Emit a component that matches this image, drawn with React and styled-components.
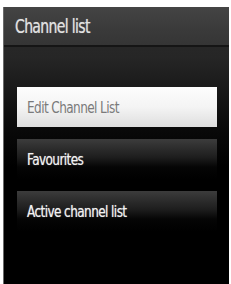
import React from 'react'
import styled, { createGlobalStyle } from 'styled-components'

const GlobalStyle = createGlobalStyle`
  html, body {
    margin: 0;
    padding: 0;
    background: #ffffff;
  }
`

const items = [
  { label: 'Edit Channel List', active: true },
  { label: 'Favourites' },
  { label: 'Active channel list' },
]

const App = () => (
  <>
    <GlobalStyle />
    <Screen>
      <Header>
        <Title>Channel list</Title>
      </Header>
      <Menu>
        {items.map((item) => (
          <Item key={item.label} active={item.active}>
            <Label>{item.label}</Label>
          </Item>
        ))}
      </Menu>
    </Screen>
  </>
)

const Screen = styled.div`
  margin: 7px 2px 0 3px;
  height: 277px;
  border-left: 1px solid #6a6a6a;
  background: linear-gradient(to bottom, #2c2c2c 0px, #262626 50px, #0a0a0a 120px, #000 160px);
  font-family: 'DejaVu Sans Condensed', 'DejaVu Sans', sans-serif;
  overflow: hidden;
`

const Header = styled.div`
  height: 38px;
  display: flex;
  align-items: center;
  padding-left: 11px;
  background: linear-gradient(to bottom, #444 0%, #3a3a3a 60%, #353535 100%);
  border-bottom: 2px solid #151515;
`

const Title = styled.h1`
  display: inline-block;
  margin: 0;
  font-size: 19px;
  font-weight: 400;
  letter-spacing: -0.8px;
  color: #e2e2e2;
  text-shadow: 0 0 1px rgba(255, 255, 255, 0.5);
  transform: scaleX(0.82);
  transform-origin: left center;
  white-space: nowrap;
`

const Menu = styled.div`
  display: flex;
  flex-direction: column;
  gap: 12px;
  padding: 40px 12px 0 13px;
`

const Item = styled.div`
  height: 40px;
  display: flex;
  align-items: center;
  padding-left: 10px;
  color: ${(p) => (p.active ? '#7a7a7a' : '#f2f2f2')};
  text-shadow: ${(p) => (p.active ? 'none' : '0 0 1px rgba(255,255,255,0.6)')};
  background: ${(p) =>
    p.active
      ? 'linear-gradient(to bottom, #fdfdfd 0%, #f4f4f4 50%, #dedede 100%)'
      : 'linear-gradient(to bottom, #3c3c3c 0%, #1e1e1e 45%, #050505 70%, #000 100%)'};
`

const Label = styled.span`
  display: inline-block;
  font-size: 16px;
  letter-spacing: -0.7px;
  white-space: nowrap;
  transform: scaleX(0.84);
  transform-origin: left center;
`

export default App
